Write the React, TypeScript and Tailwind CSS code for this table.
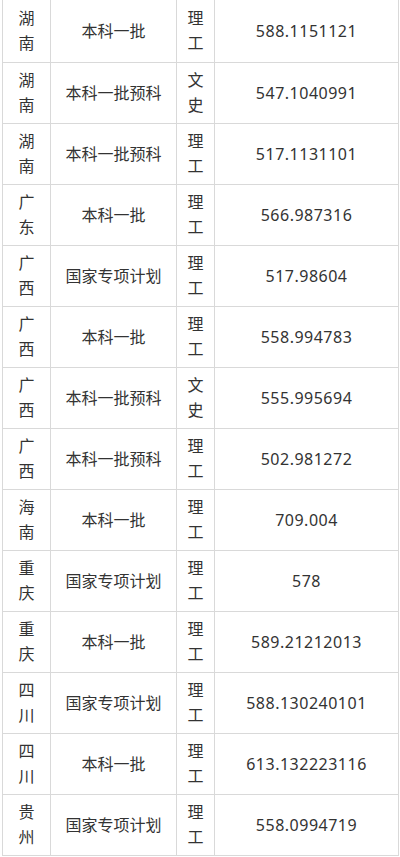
const rows = [
  ['湖南', '本科一批', '理工', '588.1151121'],
  ['湖南', '本科一批预科', '文史', '547.1040991'],
  ['湖南', '本科一批预科', '理工', '517.1131101'],
  ['广东', '本科一批', '理工', '566.987316'],
  ['广西', '国家专项计划', '理工', '517.98604'],
  ['广西', '本科一批', '理工', '558.994783'],
  ['广西', '本科一批预科', '文史', '555.995694'],
  ['广西', '本科一批预科', '理工', '502.981272'],
  ['海南', '本科一批', '理工', '709.004'],
  ['重庆', '国家专项计划', '理工', '578'],
  ['重庆', '本科一批', '理工', '589.21212013'],
  ['四川', '国家专项计划', '理工', '588.130240101'],
  ['四川', '本科一批', '理工', '613.132223116'],
  ['贵州', '国家专项计划', '理工', '558.0994719'],
];

const cell = 'flex items-center justify-center border-l border-b border-[#d9d9d9] text-center';

const App = () => {
  return (
    <div className="min-h-screen bg-white">
      <div
        className="ml-[2px] w-[397px] text-[16px] text-[#333] border-r border-[#d9d9d9]"
        style={{ fontFamily: '"Noto Sans", "Noto Sans CJK SC", sans-serif' }}
      >
        {rows.map((r, i) => (
          <div
            key={i}
            className={`grid grid-cols-[48px_126px_38px_184px] ${i === 0 ? 'h-[63px]' : 'h-[61px]'}`}
          >
            <div className={`${cell} flex-col leading-[25px]`}>
              <span>{r[0][0]}</span>
              <span>{r[0][1]}</span>
            </div>
            <div className={cell}>{r[1]}</div>
            <div className={`${cell} flex-col leading-[25px]`}>
              <span>{r[2][0]}</span>
              <span>{r[2][1]}</span>
            </div>
            <div className={`${cell} tracking-[0.5px]`}>{r[3]}</div>
          </div>
        ))}
      </div>
    </div>
  );
};

export default App;
